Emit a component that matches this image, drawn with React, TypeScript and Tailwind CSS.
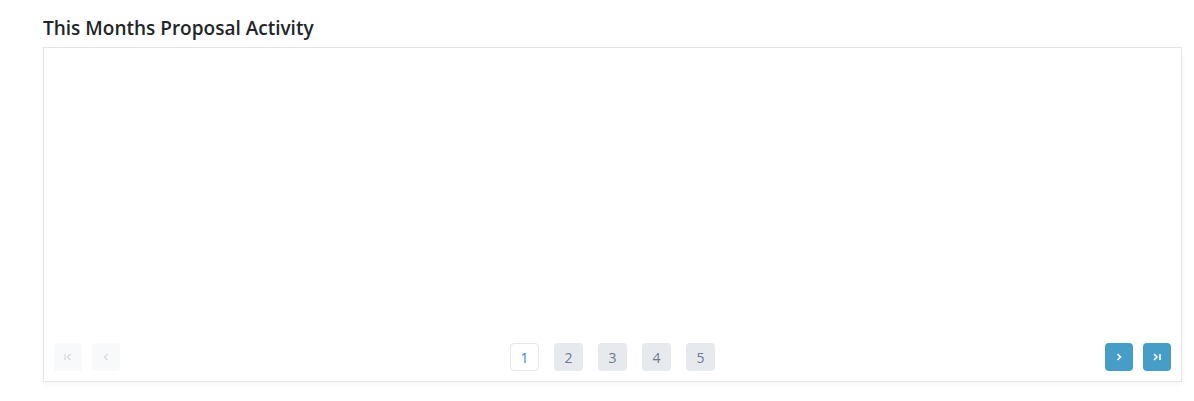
import React from "react";

const pages = [1, 2, 3, 4, 5];

const FirstIcon = () => (
  <svg width="10" height="10" viewBox="0 0 10 10" fill="none" stroke="currentColor" strokeWidth="1.3">
    <path d="M2 2v6" />
    <path d="M7.5 2L4.5 5l3 3" />
  </svg>
);

const PrevIcon = () => (
  <svg width="10" height="10" viewBox="0 0 10 10" fill="none" stroke="currentColor" strokeWidth="1.3">
    <path d="M6.5 2L3.5 5l3 3" />
  </svg>
);

const NextIcon = () => (
  <svg width="10" height="10" viewBox="0 0 10 10" fill="none" stroke="currentColor" strokeWidth="1.6">
    <path d="M3.5 2l3 3-3 3" />
  </svg>
);

const LastIcon = () => (
  <svg width="10" height="10" viewBox="0 0 10 10" fill="none" stroke="currentColor" strokeWidth="1.6">
    <path d="M2 2l3 3-3 3" />
    <path d="M8 2v6" />
  </svg>
);

export default function App() {
  return (
    <div
      className="w-[1194px] h-[401px] bg-white pl-[43px] pr-[12px] pt-[15px]"
      style={{ fontFamily: '"Open Sans", "Noto Sans", sans-serif' }}
    >
      <h2 className="text-[19px] leading-[26px] font-semibold text-[#212529] mb-[6px]">
        This Months Proposal Activity
      </h2>

      {/* Chart card */}
      <div className="h-[335px] border border-[#e3e6e9] bg-white shadow-[0_2px_6px_rgba(0,0,0,0.04)] flex flex-col">
        <div className="flex-1" />

        <div className="flex items-center justify-between px-[10px] pb-[10px]">
          <div className="flex gap-[10px]">
            <button className="w-[28px] h-[28px] rounded-[4px] bg-[#f8f9fb] text-[#d5d9de] flex items-center justify-center">
              <FirstIcon />
            </button>
            <button className="w-[28px] h-[28px] rounded-[4px] bg-[#f8f9fb] text-[#d5d9de] flex items-center justify-center">
              <PrevIcon />
            </button>
          </div>

          <div className="flex gap-[15px]">
            {pages.map((p) => (
              <button
                key={p}
                className={
                  p === 1
                    ? "w-[29px] h-[28px] rounded-[4px] border border-[#e3e6ea] bg-white text-[14px] text-[#3b7fc4] flex items-center justify-center"
                    : "w-[29px] h-[28px] rounded-[4px] bg-[#e6eaee] text-[14px] text-[#6b7a8c] flex items-center justify-center"
                }
              >
                {p}
              </button>
            ))}
          </div>

          <div className="flex gap-[10px]">
            <button className="w-[28px] h-[28px] rounded-[4px] bg-[#469dc8] text-white flex items-center justify-center">
              <NextIcon />
            </button>
            <button className="w-[28px] h-[28px] rounded-[4px] bg-[#469dc8] text-white flex items-center justify-center">
              <LastIcon />
            </button>
          </div>
        </div>
      </div>
    </div>
  );
}
